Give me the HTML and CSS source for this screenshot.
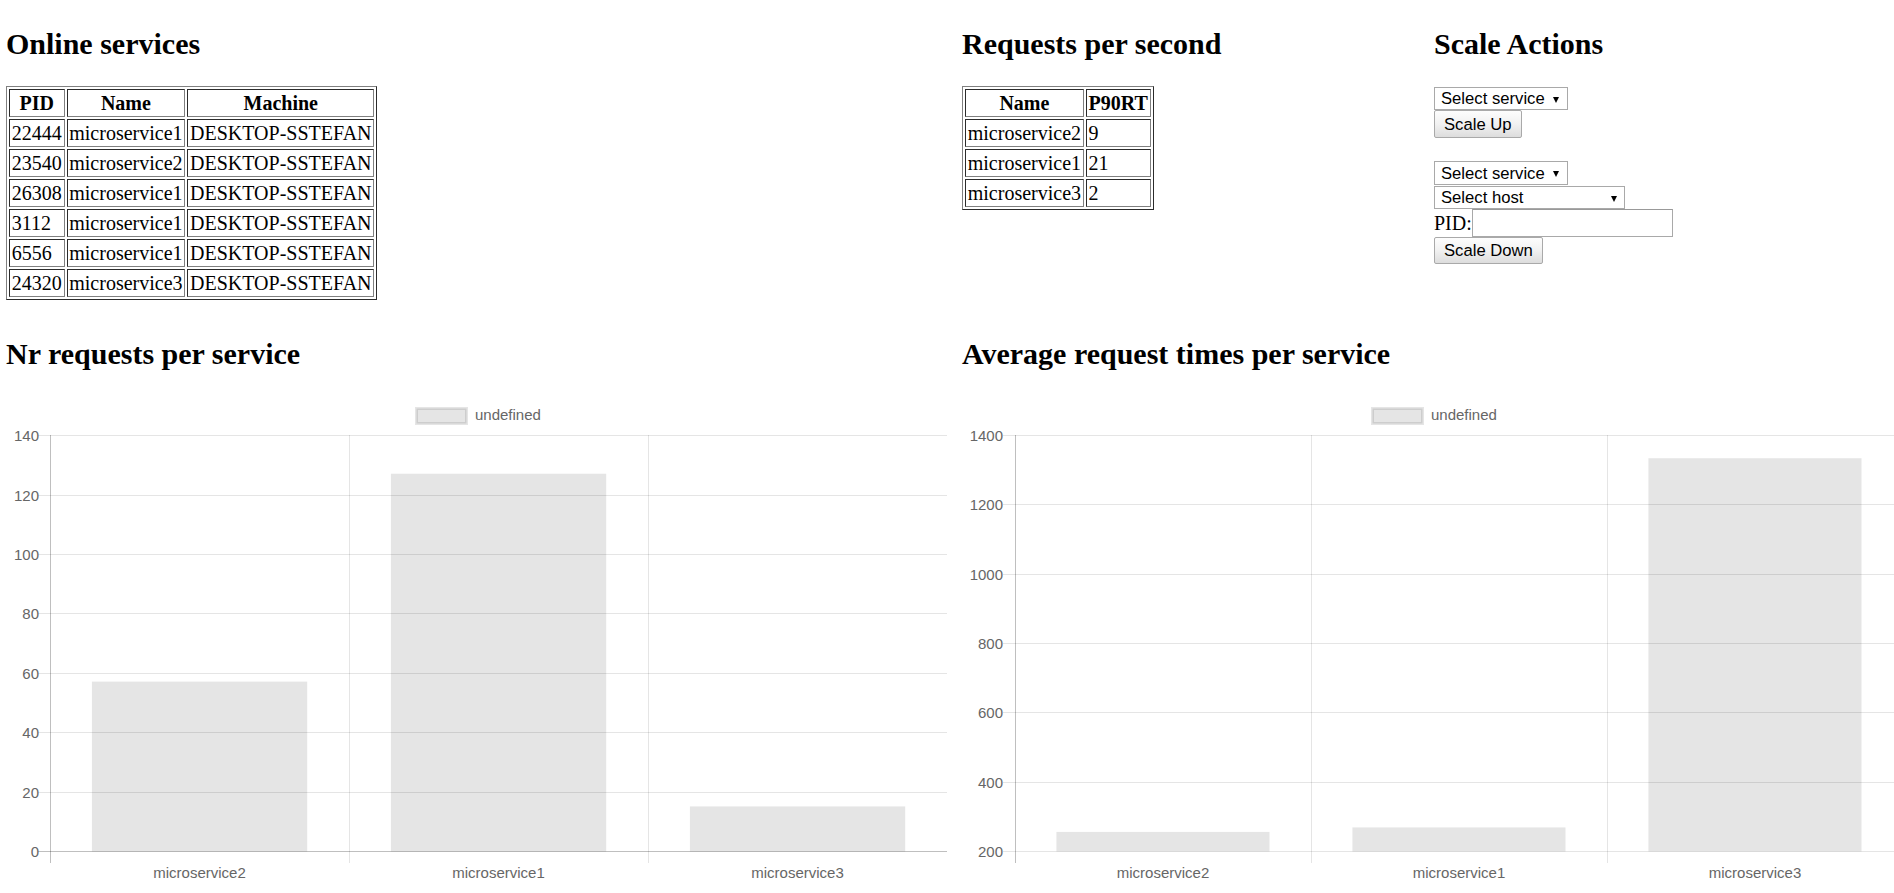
FILE: index.html
```html
<!DOCTYPE html>
<html>
<head>
<meta charset="utf-8">
<title>Services dashboard</title>
<link rel="stylesheet" href="styles.css">
</head>
<body>
<div class="page">
  <div class="top-row">
    <section class="panel">
      <h2 class="title">Online services</h2>
      <table class="data">
        <tr><th>PID</th><th>Name</th><th>Machine</th></tr>
        <tr><td>22444</td><td>microservice1</td><td>DESKTOP-SSTEFAN</td></tr>
        <tr><td>23540</td><td>microservice2</td><td>DESKTOP-SSTEFAN</td></tr>
        <tr><td>26308</td><td>microservice1</td><td>DESKTOP-SSTEFAN</td></tr>
        <tr><td>3112</td><td>microservice1</td><td>DESKTOP-SSTEFAN</td></tr>
        <tr><td>6556</td><td>microservice1</td><td>DESKTOP-SSTEFAN</td></tr>
        <tr><td>24320</td><td>microservice3</td><td>DESKTOP-SSTEFAN</td></tr>
      </table>
    </section>
    <div class="top-right">
      <section class="panel">
        <h2 class="title">Requests per second</h2>
        <table class="data">
          <tr><th>Name</th><th>P90RT</th></tr>
          <tr><td>microservice2</td><td>9</td></tr>
          <tr><td>microservice1</td><td>21</td></tr>
          <tr><td>microservice3</td><td>2</td></tr>
        </table>
      </section>
      <section class="panel">
        <h2 class="title">Scale Actions</h2>
        <div class="scale-form">
          <div class="select-wrap sel-service"><select class="select"><option>Select service</option></select></div>
          <button class="btn btn-up" type="button">Scale Up</button>
          <div class="select-wrap sel-service sel-second"><select class="select"><option>Select service</option></select></div>
          <div class="select-wrap sel-host"><select class="select"><option>Select host</option></select></div>
          <label class="pid-row">PID:<input class="pid-input" type="text"></label>
          <button class="btn btn-down" type="button">Scale Down</button>
        </div>
      </section>
    </div>
  </div>

  <div class="chart-row">
    <section class="panel">
      <h2 class="chart-title">Nr requests per service</h2>
      <svg class="chart" width="942" height="500" viewBox="0 0 942 500">
        <rect class="legend-box" x="410.5" y="13.5" width="50" height="15"/>
        <text class="lbl" x="469" y="25">undefined</text>

        <line class="grid" x1="32" y1="40.5" x2="941" y2="40.5"/>
        <line class="grid" x1="32" y1="100.5" x2="941" y2="100.5"/>
        <line class="grid" x1="32" y1="159.5" x2="941" y2="159.5"/>
        <line class="grid" x1="32" y1="218.5" x2="941" y2="218.5"/>
        <line class="grid" x1="32" y1="278.5" x2="941" y2="278.5"/>
        <line class="grid" x1="32" y1="337.5" x2="941" y2="337.5"/>
        <line class="grid" x1="32" y1="397.5" x2="941" y2="397.5"/>
        <line class="grid zero" x1="32" y1="456.5" x2="941" y2="456.5"/>

        <line class="grid zero" x1="44.5" y1="40" x2="44.5" y2="468"/>
        <line class="grid" x1="343.5" y1="40" x2="343.5" y2="468"/>
        <line class="grid" x1="642.5" y1="40" x2="642.5" y2="468"/>

        <rect class="bar" x="85.9" y="286.6" width="215.3" height="169.9"/>
        <rect class="bar" x="384.9" y="78.7" width="215.3" height="377.8"/>
        <rect class="bar" x="683.9" y="411.4" width="215.3" height="45.1"/>

        <text class="lbl end" x="33" y="45.5">140</text>
        <text class="lbl end" x="33" y="105.5">120</text>
        <text class="lbl end" x="33" y="164.5">100</text>
        <text class="lbl end" x="33" y="223.5">80</text>
        <text class="lbl end" x="33" y="283.5">60</text>
        <text class="lbl end" x="33" y="342.5">40</text>
        <text class="lbl end" x="33" y="402.5">20</text>
        <text class="lbl end" x="33" y="461.5">0</text>

        <text class="lbl mid" x="193.5" y="483">microservice2</text>
        <text class="lbl mid" x="492.5" y="483">microservice1</text>
        <text class="lbl mid" x="791.5" y="483">microservice3</text>
      </svg>
    </section>
    <section class="panel">
      <h2 class="chart-title">Average request times per service</h2>
      <svg class="chart" width="942" height="500" viewBox="0 0 942 500">
        <rect class="legend-box" x="410.5" y="13.5" width="50" height="15"/>
        <text class="lbl" x="469" y="25">undefined</text>

        <line class="grid" x1="40.5" y1="40.5" x2="941" y2="40.5"/>
        <line class="grid" x1="40.5" y1="109.5" x2="941" y2="109.5"/>
        <line class="grid" x1="40.5" y1="179.5" x2="941" y2="179.5"/>
        <line class="grid" x1="40.5" y1="248.5" x2="941" y2="248.5"/>
        <line class="grid" x1="40.5" y1="317.5" x2="941" y2="317.5"/>
        <line class="grid" x1="40.5" y1="387.5" x2="941" y2="387.5"/>
        <line class="grid" x1="40.5" y1="456.5" x2="941" y2="456.5"/>

        <line class="grid zero" x1="53.5" y1="40" x2="53.5" y2="468"/>
        <line class="grid" x1="349.5" y1="40" x2="349.5" y2="468"/>
        <line class="grid" x1="645.5" y1="40" x2="645.5" y2="468"/>

        <rect class="bar" x="94.4" y="436.9" width="213.1" height="19.6"/>
        <rect class="bar" x="390.4" y="432.4" width="213.1" height="24.1"/>
        <rect class="bar" x="686.4" y="63.2" width="213.1" height="393.3"/>

        <text class="lbl end" x="41" y="45.5">1400</text>
        <text class="lbl end" x="41" y="114.5">1200</text>
        <text class="lbl end" x="41" y="184.5">1000</text>
        <text class="lbl end" x="41" y="253.5">800</text>
        <text class="lbl end" x="41" y="322.5">600</text>
        <text class="lbl end" x="41" y="392.5">400</text>
        <text class="lbl end" x="41" y="461.5">200</text>

        <text class="lbl mid" x="201" y="483">microservice2</text>
        <text class="lbl mid" x="497" y="483">microservice1</text>
        <text class="lbl mid" x="793" y="483">microservice3</text>
      </svg>
    </section>
  </div>
</div>
</body>
</html>
```

FILE: styles.css
```css
html, body {
  overflow: hidden;
}

body {
  margin: 0;
  background: #ffffff;
  color: #000000;
  font-family: "Liberation Serif", "Times New Roman", serif;
  font-size: 20px;
}

.page {
  padding-left: 6px;
  width: 1898px;
}

.top-row {
  display: grid;
  grid-template-columns: 942px 942px;
  column-gap: 14px;
  padding-bottom: 10px;
}

.top-right {
  display: grid;
  grid-template-columns: 472px 470px;
}

.title,
.chart-title {
  font-family: "Liberation Serif", "Times New Roman", serif;
  font-size: 30px;
  font-weight: bold;
  line-height: 34px;
  margin: 27px 0 25px;
}

.chart-title {
  margin-bottom: 24px;
}

/* tables */
.data {
  border: 1px outset gray;
  border-collapse: separate;
  border-spacing: 2px;
  font-family: "Liberation Serif", "Times New Roman", serif;
  font-size: 20px;
  line-height: 23px;
}

.data th,
.data td {
  border: 1px inset gray;
  padding: 1.5px 1.75px;
  white-space: nowrap;
}

.data th {
  font-weight: bold;
  text-align: center;
}

.data td {
  text-align: left;
}

/* scale actions form */
.scale-form {
  display: flex;
  flex-direction: column;
  align-items: flex-start;
  padding-top: 1px;
}

.select-wrap {
  position: relative;
  box-sizing: border-box;
  height: 23px;
}

.select-wrap::after {
  content: "";
  position: absolute;
  top: 50%;
  right: 9px;
  margin-top: -2px;
  border-left: 3.5px solid transparent;
  border-right: 3.5px solid transparent;
  border-top: 6px solid #000000;
  pointer-events: none;
}

.sel-service {
  width: 134px;
}

.sel-second {
  margin-top: 23px;
  height: 24px;
}

.sel-host {
  width: 191px;
  margin-top: 1px;
}

.sel-host::after {
  right: 8px;
}

.select {
  -webkit-appearance: none;
  appearance: none;
  box-sizing: border-box;
  display: block;
  width: 100%;
  height: 100%;
  margin: 0;
  padding: 0 0 0 6px;
  border: 1px solid #a9a9a9;
  border-radius: 0;
  background: #ffffff;
  color: #000000;
  font-family: "Liberation Sans", Arial, sans-serif;
  font-size: 16.67px;
  line-height: 19px;
}

.btn {
  box-sizing: border-box;
  margin: 0;
  padding: 0 9px;
  border: 1px solid #a9a9a9;
  border-radius: 2px;
  background: linear-gradient(to bottom, #fdfdfd 0%, #f1f1f1 50%, #dddddd 100%);
  color: #000000;
  font-family: "Liberation Sans", Arial, sans-serif;
  font-size: 16.67px;
  line-height: 19px;
  white-space: nowrap;
}

.btn-up {
  height: 28px;
}

.btn-down {
  height: 27px;
}

.pid-row {
  display: flex;
  align-items: center;
  height: 28px;
  font-family: "Liberation Serif", "Times New Roman", serif;
  font-size: 20px;
  line-height: 23px;
}

.pid-input {
  box-sizing: border-box;
  width: 201px;
  height: 28px;
  margin: 0;
  padding: 1px 2px;
  border: 1px solid #a9a9a9;
  border-top-color: #999999;
  background: #ffffff;
  font-family: "Liberation Sans", Arial, sans-serif;
  font-size: 16.67px;
}

/* charts */
.chart-row {
  display: grid;
  grid-template-columns: 942px 942px;
  column-gap: 14px;
}

.chart {
  display: block;
}

.grid {
  stroke: rgba(0, 0, 0, 0.1);
  stroke-width: 1;
  fill: none;
  shape-rendering: crispEdges;
}

.grid.zero {
  stroke: rgba(0, 0, 0, 0.25);
}

.bar {
  fill: rgba(0, 0, 0, 0.1);
}

.legend-box {
  fill: rgba(0, 0, 0, 0.1);
  stroke: rgba(0, 0, 0, 0.1);
  stroke-width: 3;
}

.lbl {
  font-family: "Liberation Sans", Arial, sans-serif;
  font-size: 15px;
  fill: #666666;
}

.lbl.end {
  text-anchor: end;
}

.lbl.mid {
  text-anchor: middle;
}
```
